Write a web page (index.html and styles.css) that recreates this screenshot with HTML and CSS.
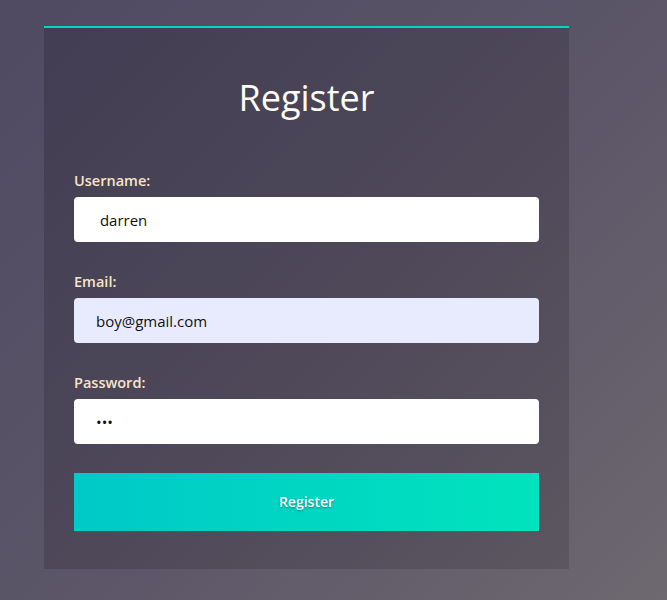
FILE: index.html
```html
<!DOCTYPE html>
<html lang="en">
<head>
    <meta charset="UTF-8">
    <meta name="viewport" content="width=device-width, initial-scale=1.0">
    <title>Register</title>
    <link rel="stylesheet" href="styles.css">
</head>
<body>
    <div class="card">
        <h1 class="title">Register</h1>
        <form class="form">
            <div class="field">
                <label for="username">Username:</label>
                <input type="text" id="username" class="input" value=" darren">
            </div>
            <div class="field">
                <label for="email">Email:</label>
                <input type="email" id="email" class="input autofill" value="boy@gmail.com">
            </div>
            <div class="field">
                <label for="password">Password:</label>
                <input type="password" id="password" class="input" value="abc">
            </div>
            <button type="button" class="submit">Register</button>
        </form>
    </div>
</body>
</html>
```

FILE: styles.css
```css
html {
    height: 100%;
}
body {
    margin: 0;
    min-height: 100%;
    background: linear-gradient(135deg, #4f4a62 0%, #5c5668 55%, #6e6870 100%);
    font-family: "Open Sans", "Liberation Sans", sans-serif;
}
.card {
    width: 465px;
    margin: 26px 0 0 44px;
    padding: 0 30px 38px;
    border-top: 2px solid #00d7c3;
    background: linear-gradient(135deg, rgba(40, 35, 52, 0.35), rgba(60, 55, 65, 0.3));
}
.title {
    margin: 0;
    padding-top: 47px;
    font-size: 36px;
    font-weight: 400;
    line-height: 46px;
    text-align: center;
    color: #fdfbf2;
}
.form {
    margin-top: 50px;
}
.field {
    margin-bottom: 30px;
}
.field label {
    display: block;
    margin-bottom: 6px;
    font-size: 14.5px;
    font-weight: 600;
    line-height: 20px;
    color: #f6e4cb;
}
.input {
    display: block;
    box-sizing: border-box;
    width: 100%;
    height: 45px;
    padding: 0 22px;
    border: none;
    border-radius: 4px;
    background: #fff;
    font-family: "Open Sans", "Liberation Sans", sans-serif;
    font-size: 15px;
    color: #111;
}
.autofill {
    background: #e8ebfd;
}
.submit {
    display: block;
    width: 100%;
    height: 58px;
    margin-top: -1px;
    padding: 0 0 2px;
    border: none;
    background: linear-gradient(90deg, #00c9c8, #00e3bd);
    color: #fff;
    font-family: "Open Sans", "Liberation Sans", sans-serif;
    font-size: 14px;
    font-weight: 600;
    text-shadow: 0 1px 2px rgba(0, 0, 0, 0.35);
    cursor: pointer;
}
```
